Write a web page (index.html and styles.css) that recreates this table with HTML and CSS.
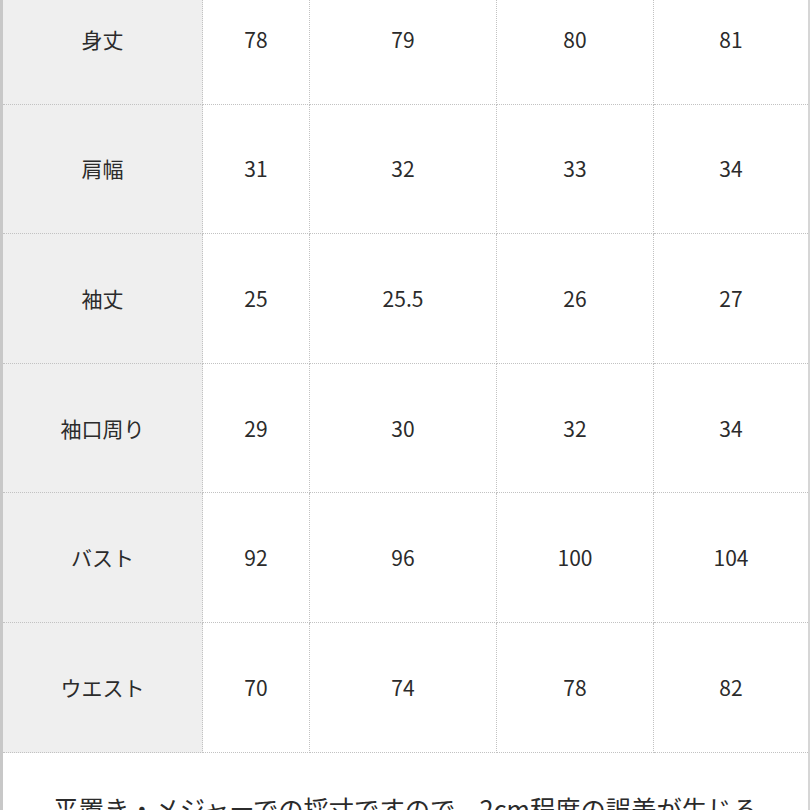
FILE: index.html
```html
<!DOCTYPE html>
<html lang="ja">
<head>
<meta charset="utf-8">
<title>サイズ表</title>
<link rel="stylesheet" href="styles.css">
</head>
<body>
<div class="sheet">
  <div class="grid">
    <div class="cell head">身丈</div><div class="cell">78</div><div class="cell">79</div><div class="cell">80</div><div class="cell">81</div>
    <div class="cell head">肩幅</div><div class="cell">31</div><div class="cell">32</div><div class="cell">33</div><div class="cell">34</div>
    <div class="cell head">袖丈</div><div class="cell">25</div><div class="cell">25.5</div><div class="cell">26</div><div class="cell">27</div>
    <div class="cell head">袖口周り</div><div class="cell">29</div><div class="cell">30</div><div class="cell">32</div><div class="cell">34</div>
    <div class="cell head">バスト</div><div class="cell">92</div><div class="cell">96</div><div class="cell">100</div><div class="cell">104</div>
    <div class="cell head">ウエスト</div><div class="cell">70</div><div class="cell">74</div><div class="cell">78</div><div class="cell">82</div>
  </div>
  <p class="note">平置き・メジャーでの採寸ですので、2cm程度の誤差が生じる</p>
</div>
</body>
</html>
```
FILE: styles.css
```css
html, body {
  margin: 0;
  padding: 0;
  background: #ffffff;
  overflow: hidden;
}
body {
  width: 810px;
  height: 810px;
  font-family: "Noto Sans CJK JP", "Noto Sans", sans-serif;
  color: #2b2b2b;
}
.sheet {
  box-sizing: border-box;
  width: 810px;
  margin-top: -25px;
  border-left: 3px solid #c8c8c8;
  border-right: 2px solid #d6d6d6;
  min-height: 900px;
}
.grid {
  display: grid;
  grid-template-columns: 200px 107px 187px 157px 154px;
  grid-auto-rows: 129.6px;
}
.cell {
  box-sizing: border-box;
  display: flex;
  align-items: center;
  justify-content: center;
  border-right: 1px dotted #c2c2c2;
  border-bottom: 1px dotted #c2c2c2;
  font-size: 21px;
  line-height: 1;
  background: #ffffff;
}
.cell:nth-child(5n) {
  border-right: none;
}
.head {
  background: #efefef;
}
.note {
  margin: 0;
  padding-top: 40px;
  font-size: 25.3px;
  line-height: 30px;
  text-align: center;
  white-space: nowrap;
  color: #2b2b2b;
}
```
